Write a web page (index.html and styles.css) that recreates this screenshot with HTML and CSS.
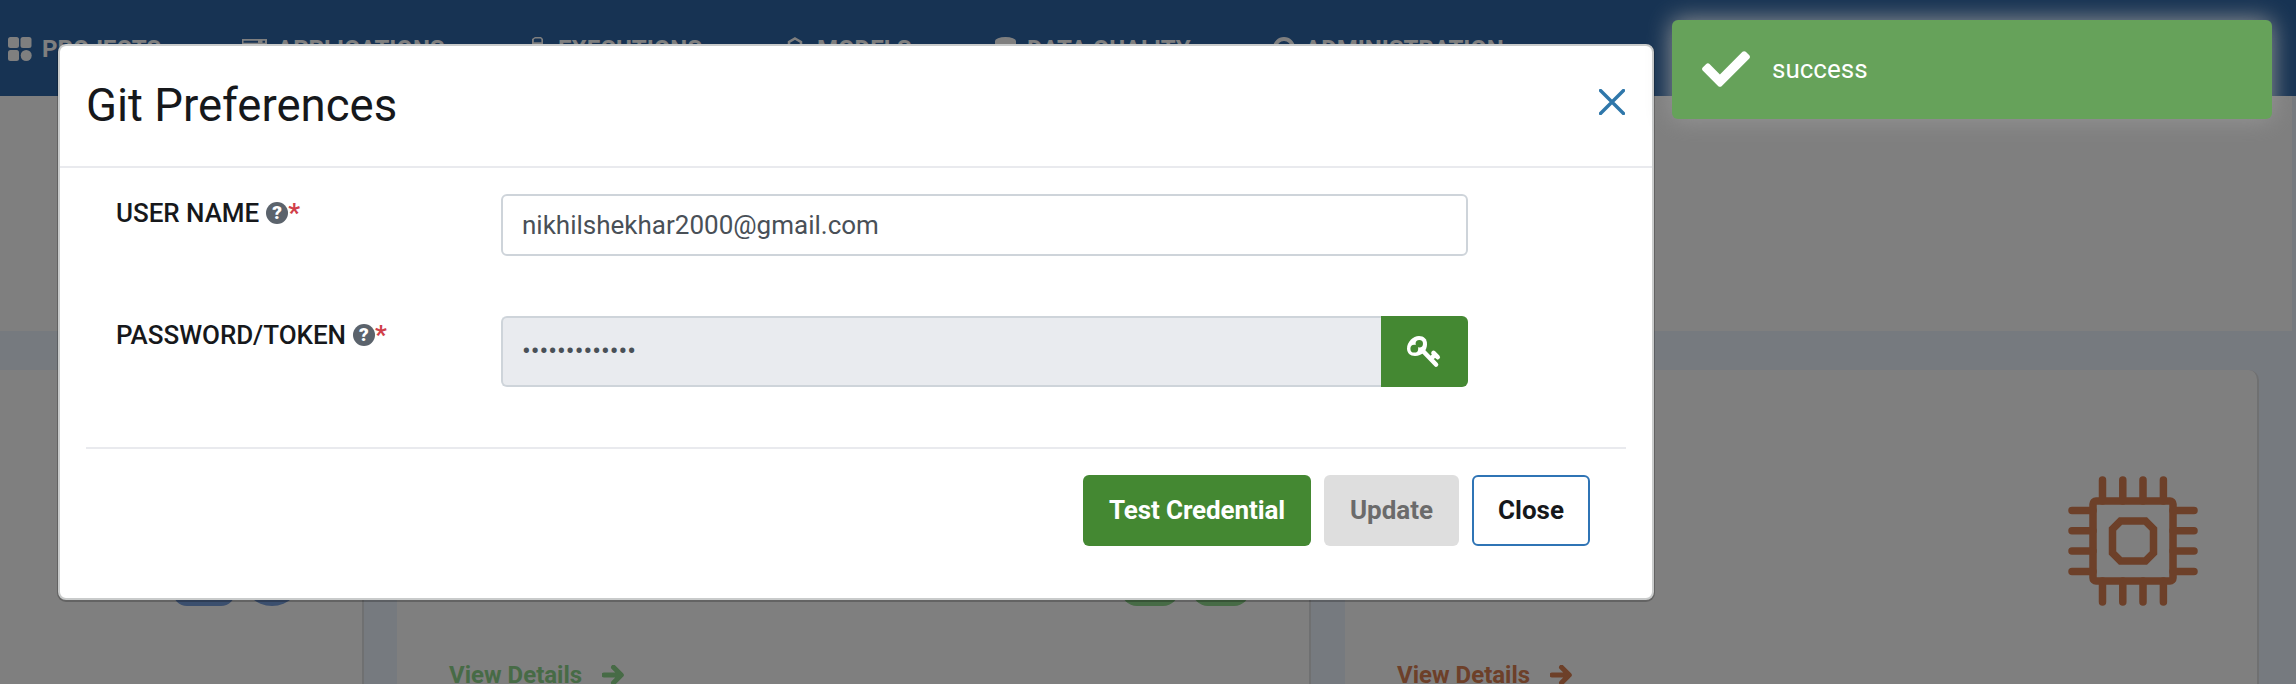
FILE: index.html
```html
<!DOCTYPE html>
<html lang="en">
<head>
<meta charset="utf-8">
<title>Git Preferences</title>
<link rel="stylesheet" href="styles.css">
</head>
<body>
<div class="page">
  <nav class="nav">
    <a class="nav-item projects"><svg width="24" height="24" viewBox="0 0 24 24"><rect width="11" height="11" rx="2.5"/><rect x="12.5" width="11" height="11" rx="2.5"/><rect y="13" width="11" height="11" rx="2.5"/><circle cx="18.2" cy="18.5" r="5.5"/></svg><span>PROJECTS</span></a>
    <a class="nav-item applications"><svg width="25" height="20" viewBox="0 0 25 20"><path fill-rule="evenodd" d="M0 0h25v20H0zM1.500 1.800v2h14.500V1.800zM20.500 1.800v2H23v-2zM2 6.500V18h21V6.500z"/></svg><span>APPLICATIONS</span></a>
    <a class="nav-item executions"><svg width="12" height="24" viewBox="0 0 12 24"><path fill-rule="evenodd" d="M3 0h6l2 2v22H0V2zM3 1.400L1.800 2.600v2.600h7.600V2.600L8.500 1.400z"/></svg><span>EXECUTIONS</span></a>
    <a class="nav-item models"><svg width="16" height="24" viewBox="0 0 16 24"><path class="line" d="M8 1.500L14 5v4l-6 4-6-4V5zM8 13v9"/></svg><span>MODELS</span></a>
    <a class="nav-item quality"><svg width="21" height="24" viewBox="0 0 21 24"><ellipse cx="10.500" cy="4" rx="10.500" ry="4"/><path d="M0 4h21v16q-10 6-21 0z"/></svg><span>DATA QUALITY</span></a>
    <a class="nav-item admin"><svg width="22" height="24" viewBox="0 0 22 24"><circle class="ring" cx="11" cy="11" r="9"/></svg><span>ADMINISTRATION</span></a>
  </nav>
  <div class="banner"></div>
  <main class="cards">
    <section class="card blue">
      <div class="badges"><i class="badge"></i><i class="badge circle"></i></div>
    </section>
    <section class="card green">
      <div class="badges"><i class="badge"></i><i class="badge"></i></div>
      <a class="details">View Details <svg width="22" height="20" viewBox="0 0 22 20"><path class="arrow" d="M2 10h17M11.500 2.200L19.300 10l-7.800 7.800"/></svg></a>
    </section>
    <section class="card orange">
      <svg class="chip" width="130" height="130" viewBox="0 0 130 130"><rect x="25" y="25" width="80" height="80" rx="3"/><path d="M52.500 45h25l8 8v24l-8 8h-25l-8-8V53zM34.500 4v21M54.800 4v21M75 4v21M95.400 4v21M34.500 105v21M54.800 105v21M75 105v21M95.400 105v21M4 34.500h21M4 54.800h21M4 75h21M4 95.400h21M105 34.500h21M105 54.800h21M105 75h21M105 95.400h21"/></svg>
      <a class="details">View Details <svg width="22" height="20" viewBox="0 0 22 20"><path class="arrow" d="M2 10h17M11.500 2.200L19.300 10l-7.800 7.800"/></svg></a>
    </section>
  </main>
</div>
<div class="backdrop"></div>

<div class="modal" role="dialog">
  <header class="modal-head">
    <h1>Git Preferences</h1>
    <svg class="close-x" width="26" height="26" viewBox="0 0 26 26"><path d="M1.500 1.500l23 23M24.500 1.500l-23 23"/></svg>
  </header>
  <div class="form">
    <div class="row">
      <div class="label"><span>USER NAME</span><b class="help">?</b><span class="req">*</span></div>
      <div class="field">nikhilshekhar2000@gmail.com</div>
    </div>
    <div class="row">
      <div class="label"><span>PASSWORD/TOKEN</span><b class="help">?</b><span class="req">*</span></div>
      <div class="group">
        <div class="field secret">•••••••••••••</div>
        <div class="key"><svg width="34" height="32" viewBox="0 0 34 32"><path class="bow" d="M12 0C17 0 20 3 20 8C20 15 15 20 8 20C3 20 0 17 0 12.500C0 6 6 0 12 0z"/><circle class="hole" cx="12.300" cy="7.800" r="3.700"/><circle class="hole" cx="7.300" cy="12.700" r="3.900"/><path class="stem" d="M15 14l14 14.500M24.500 22l3.300-3M26.500 17l4.200 4.200"/></svg></div>
      </div>
    </div>
  </div>
  <footer class="modal-foot">
    <button class="btn test">Test Credential</button>
    <button class="btn update">Update</button>
    <button class="btn close">Close</button>
  </footer>
</div>

<div class="toast">
  <svg width="48" height="37" viewBox="0 0 512 395"><path d="M174 386L7 220c-9-9-9-24 0-34l38-37c10-10 25-10 35 0l111 112L432 20c10-10 25-10 35 0l38 36c9 10 9 25 0 35L209 386c-10 10-25 10-35 0z"/></svg>
  <span>success</span>
</div>
</body>
</html>
```

FILE: styles.css
```css
* { box-sizing: border-box; }
body { margin: 0; width: 2296px; height: 684px; overflow: hidden; position: relative; font-family: Roboto, "Liberation Sans", sans-serif; color: #16181b; }
.page { height: 684px; overflow: hidden; background: #ecf4ff; }
.nav { height: 96px; background: #2e66a6; display: grid; grid-template-columns: 234px 290px 255px 208px 278px 1fr; padding: 35px 0 0 8px; }
.nav-item { display: flex; align-items: flex-start; color: #fff; fill: #fff; font-size: 24px; font-weight: 700; line-height: 28px; white-space: nowrap; }
.nav-item svg { margin-top: 2px; flex: none; }
.nav-item span { margin-left: 11px; }
.projects span { margin-left: 10px; }
.applications svg { margin-top: 4px; }
.applications span { margin-left: 10px; }
.executions span, .models span { margin-left: 14px; }
.admin span { margin-left: 10px; }
.line { fill: none; stroke: #fff; stroke-width: 2.5; }
.ring { fill: none; stroke: #fff; stroke-width: 4; }
.banner { height: 235px; width: 2292px; background: #fff; }
.cards { display: flex; gap: 33px; margin-top: 39px; height: 400px; }
.card { background: #fff; border-right: 2px solid #dfe0e2; border-radius: 0 10px 10px 0; flex: none; width: 914px; position: relative; }
.card.blue { width: 364px; }
.card.orange { margin-left: 1px; }
.badges { display: flex; gap: 18px; position: absolute; top: 176px; left: 173px; color: #769edc; }
.green .badges { left: 724px; gap: 13px; color: #8ed68c; }
.badge { width: 62px; height: 60px; border-radius: 14px; background: currentColor; }
.badge.circle { width: 60px; margin-left: -11px; border-radius: 30px; }
.green .badge { width: 58px; border-radius: 16px; }
.green { color: #8ed68c; }
.orange { color: #da8052; }
.details { display: flex; align-items: center; gap: 20px; font-size: 24px; font-weight: 700; line-height: 28px; position: absolute; top: 291px; left: 52px; white-space: nowrap; }
.arrow { fill: none; stroke: currentColor; stroke-width: 5; stroke-linecap: round; stroke-linejoin: round; }
.chip { position: absolute; left: 723px; top: 106px; fill: none; stroke: currentColor; stroke-width: 7.5; stroke-linecap: round; stroke-linejoin: miter; }
.backdrop { position: absolute; inset: 0; background: rgba(0, 0, 0, .5); }

.modal { position: absolute; left: 58px; top: 44px; width: 1596px; height: 556px; background: #fff; border: 2px solid #c9cbcb; border-radius: 8px; box-shadow: 0 1px 0 1px rgba(0, 0, 0, .22); display: flex; flex-direction: column; }
.modal-head { height: 122px; flex: none; border-bottom: 2px solid #e9eaee; display: flex; justify-content: space-between; align-items: flex-start; padding: 33px 27px 0 26px; }
.modal-head h1 { margin: 0; font-size: 45.5px; font-weight: 400; line-height: 54px; }
.close-x { margin-top: 10px; fill: none; stroke: #2f77aa; stroke-width: 3.4; stroke-linecap: round; }
.form { padding: 26px 0 0 56px; height: 279px; flex: none; display: grid; grid-template-rows: 122px 71px; }
.row { display: grid; grid-template-columns: 385px 967px; align-items: start; }
.label { display: flex; align-items: center; font-size: 26px; font-weight: 500; line-height: 30px; padding-top: 4px; letter-spacing: -.05px; }
.help { width: 22px; height: 22px; margin-left: 7px; border-radius: 50%; background: #5b636c; color: #fff; font-size: 19px; font-weight: 900; line-height: 22px; text-align: center; }
.req { color: #d13f4a; font-weight: 700; }
.field { height: 62px; border: 2px solid #ced4da; border-radius: 6px; padding: 0 20px 0 19px; font-size: 26px; line-height: 58px; color: #495057; }
.group { display: flex; height: 71px; }
.secret { height: 71px; flex: 1; border-radius: 6px 0 0 6px; border-right: 0; background: #e9ebef; line-height: 66px; }
.key { width: 87px; background: #448832; border-radius: 0 6px 6px 0; display: flex; align-items: center; justify-content: center; padding: 1px 1px 0 0; }
.bow { fill: #fff; }
.hole { fill: #448832; }
.stem { fill: none; stroke: #fff; stroke-width: 4.6; stroke-linecap: round; }
.modal-foot { margin: 0 26px; border-top: 2px solid #e9eaee; padding: 26px 36px 0 0; display: flex; justify-content: flex-end; gap: 13px; }
.btn { height: 71px; padding: 0; border: 0; border-radius: 6px; font: 700 26px/71px Roboto, sans-serif; }
.test { width: 228px; background: #448832; color: #fff; letter-spacing: -.1px; }
.update { width: 135px; background: #dedede; color: #6b6b6b; }
.close { width: 118px; background: #fff; border: 2px solid #2f74b5; color: #16181b; line-height: 67px; }

.toast { position: absolute; left: 1672px; top: 20px; width: 600px; height: 99px; border-radius: 6px; background: #66a25a; box-shadow: 0 0 24px #999; color: #fff; display: flex; align-items: center; padding: 0 0 2px 30px; font-size: 26px; gap: 22px; fill: #fff; }
```
